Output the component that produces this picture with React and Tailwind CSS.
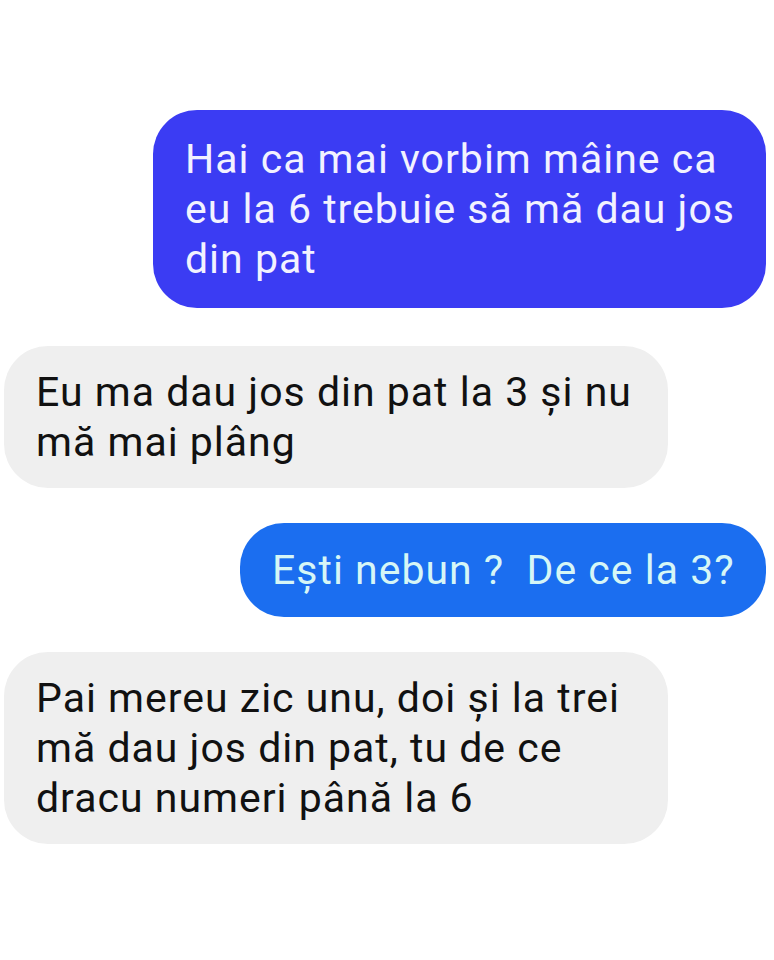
export default function App() {
  const messages = [
    {
      lines: ["Hai ca mai vorbim mâine ca", "eu la 6 trebuie să mă dau jos", "din pat"],
      bubble: "ml-[153px] w-[613px] bg-[#3b3cf3] text-[#f2f2ff] py-[24px]",
    },
    {
      lines: ["Eu ma dau jos din pat la 3 și nu", "mă mai plâng"],
      bubble: "ml-[4px] w-[664px] bg-[#efefef] text-[#111] py-[21px] mt-[38px]",
    },
    {
      lines: ["Ești nebun ?  De ce la 3?"],
      bubble: "ml-[240px] w-[526px] bg-[#1b6ef0] text-[#d6f6f6] py-[22px] mt-[35px]",
    },
    {
      lines: ["Pai mereu zic unu, doi și la trei", "mă dau jos din pat, tu de ce", "dracu numeri până la 6"],
      bubble: "ml-[4px] w-[664px] bg-[#efefef] text-[#111] py-[21px] mt-[35px]",
    },
  ];

  return (
    <div className="w-[774px] h-[960px] bg-white pt-[110px] font-['Roboto',sans-serif]">
      {messages.map((m, i) => (
        <div
          key={i}
          className={`rounded-[44px] px-[32px] text-[41px] leading-[50px] tracking-[1px] whitespace-pre ${m.bubble}`}
        >
          {m.lines.map((l, j) => (
            <div key={j}>{l}</div>
          ))}
        </div>
      ))}
    </div>
  );
}
